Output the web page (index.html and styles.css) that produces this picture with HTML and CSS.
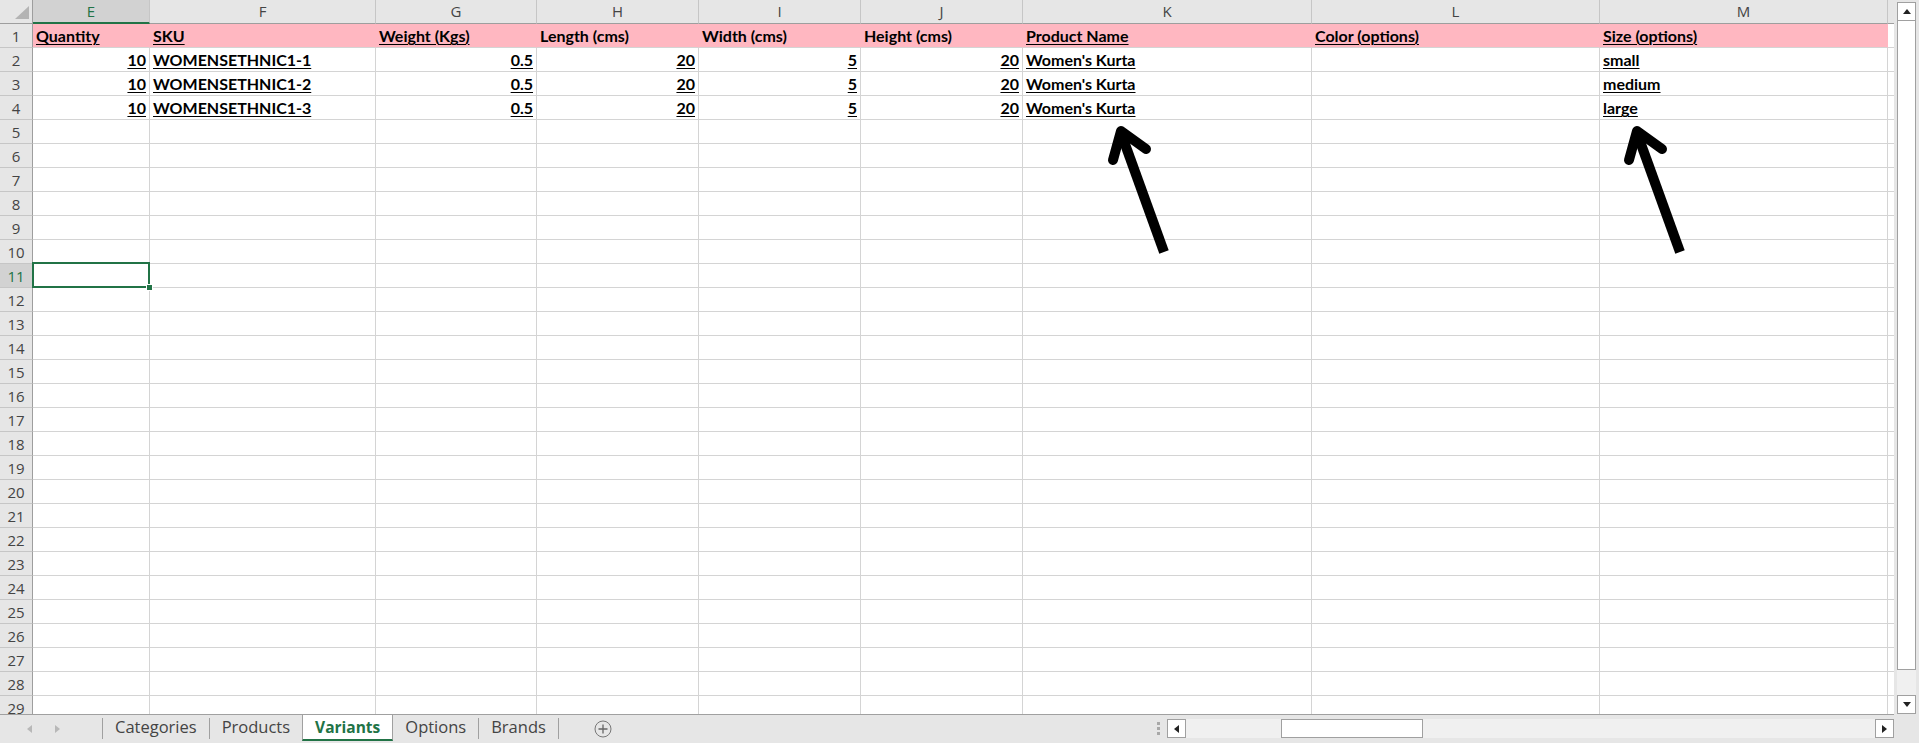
FILE: index.html
```html
<!DOCTYPE html>
<html lang="en">
<head>
  <meta charset="UTF-8" />
  <title>Variants - Book1</title>
  <link rel="stylesheet" href="styles.css">
</head>
<body>
  <div class="app">
    <div class="main">
      <div class="sheet">
        <!-- column headers -->
        <div class="corner"><svg width="32" height="23" viewBox="0 0 32 23"><polygon points="15,19 29,19 29,6" fill="#b4b4b4"/></svg></div>
        <div class="ch on">E</div><div class="ch">F</div><div class="ch">G</div><div class="ch">H</div><div class="ch">I</div><div class="ch">J</div><div class="ch">K</div><div class="ch">L</div><div class="ch">M</div><div class="ch"></div>

        <!-- data rows -->
        <div class="rh">1</div>
        <div class="pk"><u>Quantity</u></div>
        <div class="pk"><u>SKU</u></div>
        <div class="pk"><u>Weight (Kgs)</u></div>
        <div class="pk">Length (cms)</div>
        <div class="pk">Width (cms)</div>
        <div class="pk">Height (cms)</div>
        <div class="pk"><u>Product Name</u></div>
        <div class="pk"><u>Color (options)</u></div>
        <div class="pk"><u>Size (options)</u></div>
        <div></div>

        <div class="rh">2</div>
        <div class="num"><u>10</u></div><div class="txt"><u>WOMENSETHNIC1-1</u></div><div class="num"><u>0.5</u></div><div class="num"><u>20</u></div><div class="num"><u>5</u></div><div class="num"><u>20</u></div><div class="txt"><u>Women's Kurta</u></div><div></div><div class="txt"><u>small</u></div><div></div>
        <div class="rh">3</div>
        <div class="num"><u>10</u></div><div class="txt"><u>WOMENSETHNIC1-2</u></div><div class="num"><u>0.5</u></div><div class="num"><u>20</u></div><div class="num"><u>5</u></div><div class="num"><u>20</u></div><div class="txt"><u>Women's Kurta</u></div><div></div><div class="txt"><u>medium</u></div><div></div>
        <div class="rh">4</div>
        <div class="num"><u>10</u></div><div class="txt"><u>WOMENSETHNIC1-3</u></div><div class="num"><u>0.5</u></div><div class="num"><u>20</u></div><div class="num"><u>5</u></div><div class="num"><u>20</u></div><div class="txt"><u>Women's Kurta</u></div><div></div><div class="txt"><u>large</u></div><div></div>

        <!-- empty rows -->
        <div class="rh">5</div><div></div><div></div><div></div><div></div><div></div><div></div><div></div><div></div><div></div><div></div>
        <div class="rh">6</div><div></div><div></div><div></div><div></div><div></div><div></div><div></div><div></div><div></div><div></div>
        <div class="rh">7</div><div></div><div></div><div></div><div></div><div></div><div></div><div></div><div></div><div></div><div></div>
        <div class="rh">8</div><div></div><div></div><div></div><div></div><div></div><div></div><div></div><div></div><div></div><div></div>
        <div class="rh">9</div><div></div><div></div><div></div><div></div><div></div><div></div><div></div><div></div><div></div><div></div>
        <div class="rh">10</div><div></div><div></div><div></div><div></div><div></div><div></div><div></div><div></div><div></div><div></div>
        <div class="rh on">11</div><div class="sel"></div><div></div><div></div><div></div><div></div><div></div><div></div><div></div><div></div><div></div>
        <div class="rh">12</div><div></div><div></div><div></div><div></div><div></div><div></div><div></div><div></div><div></div><div></div>
        <div class="rh">13</div><div></div><div></div><div></div><div></div><div></div><div></div><div></div><div></div><div></div><div></div>
        <div class="rh">14</div><div></div><div></div><div></div><div></div><div></div><div></div><div></div><div></div><div></div><div></div>
        <div class="rh">15</div><div></div><div></div><div></div><div></div><div></div><div></div><div></div><div></div><div></div><div></div>
        <div class="rh">16</div><div></div><div></div><div></div><div></div><div></div><div></div><div></div><div></div><div></div><div></div>
        <div class="rh">17</div><div></div><div></div><div></div><div></div><div></div><div></div><div></div><div></div><div></div><div></div>
        <div class="rh">18</div><div></div><div></div><div></div><div></div><div></div><div></div><div></div><div></div><div></div><div></div>
        <div class="rh">19</div><div></div><div></div><div></div><div></div><div></div><div></div><div></div><div></div><div></div><div></div>
        <div class="rh">20</div><div></div><div></div><div></div><div></div><div></div><div></div><div></div><div></div><div></div><div></div>
        <div class="rh">21</div><div></div><div></div><div></div><div></div><div></div><div></div><div></div><div></div><div></div><div></div>
        <div class="rh">22</div><div></div><div></div><div></div><div></div><div></div><div></div><div></div><div></div><div></div><div></div>
        <div class="rh">23</div><div></div><div></div><div></div><div></div><div></div><div></div><div></div><div></div><div></div><div></div>
        <div class="rh">24</div><div></div><div></div><div></div><div></div><div></div><div></div><div></div><div></div><div></div><div></div>
        <div class="rh">25</div><div></div><div></div><div></div><div></div><div></div><div></div><div></div><div></div><div></div><div></div>
        <div class="rh">26</div><div></div><div></div><div></div><div></div><div></div><div></div><div></div><div></div><div></div><div></div>
        <div class="rh">27</div><div></div><div></div><div></div><div></div><div></div><div></div><div></div><div></div><div></div><div></div>
        <div class="rh">28</div><div></div><div></div><div></div><div></div><div></div><div></div><div></div><div></div><div></div><div></div>
        <div class="rh">29</div><div></div><div></div><div></div><div></div><div></div><div></div><div></div><div></div><div></div><div></div>

        <!-- hand-drawn arrows on top of the sheet -->
        <svg class="arrows" width="1894" height="714" viewBox="0 0 1894 714">
          <g fill="none" stroke="#000" stroke-width="10">
            <path d="M1164 252 L1121 133"/>
            <path d="M1113 160 L1121 131 L1146 149" stroke-linecap="round" stroke-linejoin="round"/>
            <path d="M1680 252 L1637 133"/>
            <path d="M1629 160 L1637 131 L1662 149" stroke-linecap="round" stroke-linejoin="round"/>
          </g>
        </svg>
      </div>

      <div class="vscroll">
        <div class="sbtn"><span class="tri up"></span></div>
        <div class="vthumb"></div>
        <div class="vtrack"></div>
        <div class="sbtn"><span class="tri down"></span></div>
      </div>
    </div>

    <div class="tabbar">
      <div class="tabbar-in">
        <div class="nav">
          <span class="tri left dim"></span>
          <span class="tri right dim"></span>
        </div>
        <div class="tabs">
          <div class="tab">Categories</div>
          <div class="tab">Products</div>
          <div class="tab active">Variants</div>
          <div class="tab">Options</div>
          <div class="tab">Brands</div>
          <div class="add">
            <svg width="18" height="18" viewBox="0 0 18 18"><circle cx="9" cy="9" r="8" fill="none" stroke="#777" stroke-width="1"/><path d="M9 4.5v9M4.5 9h9" stroke="#666" stroke-width="1.3"/></svg>
          </div>
        </div>
        <div class="grip"><i></i><i></i><i></i></div>
        <div class="hscroll">
          <div class="sbtn"><span class="tri left"></span></div>
          <div class="htrack"><div class="hthumb"></div></div>
          <div class="sbtn"><span class="tri right"></span></div>
        </div>
      </div>
    </div>
  </div>
</body>
</html>
```

FILE: styles.css
```css
body {
  margin: 0;
  background: #e6e6e6;
  font-family: 'Open Sans', sans-serif;
  overflow: hidden;
}

.app {
  width: 1919px;
  height: 743px;
  display: flex;
  flex-direction: column;
}

.main {
  display: flex;
  height: 714px;
}

/* ---- grid ---- */

.sheet {
  position: relative;
  width: 1894px;
  height: 714px;
  overflow: hidden;
  background: #fff;
  display: grid;
  grid-template-columns: 33px 117px 226px 161px 162px 162px 162px 289px 288px 288px 6px;
  grid-auto-rows: 24px;
  align-content: start;
}

.sheet > div {
  box-sizing: border-box;
  border-right: 1px solid #d4d4d4;
  border-bottom: 1px solid #d4d4d4;
  font: bold 16px 'Lato', sans-serif;
  line-height: 23px;
  padding: 0 3px;
  white-space: nowrap;
  overflow: hidden;
}

.sheet u {
  text-decoration-thickness: 1px;
  text-underline-offset: 2px;
}

.sheet > .corner {
  background: #e6e6e6;
  border-right-color: #9e9e9e;
  border-bottom-color: #9e9e9e;
  padding: 0;
}

.corner svg {
  display: block;
}

.sheet > .ch {
  background: #e6e6e6;
  border-right-color: #c6c6c6;
  border-bottom-color: #9e9e9e;
  color: #444;
  font: 15px 'Open Sans', sans-serif;
  line-height: 23px;
  text-align: center;
}

.sheet > .ch.on {
  background: #d2d2d2;
  color: #217346;
  border-bottom: 2px solid #217346;
}

.sheet > .rh {
  background: #e6e6e6;
  border-right-color: #9e9e9e;
  border-bottom-color: #c6c6c6;
  color: #444;
  font: 15px 'Open Sans', sans-serif;
  line-height: 24px;
  text-align: center;
  padding: 0;
}

.sheet > .rh.on {
  background: #d2d2d2;
  color: #217346;
}

.sheet > .pk {
  background: #ffb7c1;
  border-right-color: #ffb7c1;
}

.sheet > .num {
  text-align: right;
}

.sheet > .sel {
  position: relative;
  overflow: visible;
}

.sel::before {
  content: "";
  position: absolute;
  top: -2px;
  left: -1px;
  right: -1px;
  bottom: -1px;
  border: 2px solid #217346;
}

.sel::after {
  content: "";
  position: absolute;
  right: -4px;
  bottom: -4px;
  width: 5px;
  height: 5px;
  background: #217346;
  border: 1px solid #fff;
}

.arrows {
  position: absolute;
  top: 0;
  left: 0;
  pointer-events: none;
}

/* ---- scroll bars ---- */

.vscroll {
  width: 25px;
  box-sizing: border-box;
  padding: 2px 3px 0 3px;
  display: flex;
  flex-direction: column;
}

.sbtn {
  box-sizing: border-box;
  width: 19px;
  height: 19px;
  background: #fff;
  border: 1px solid #a0a0a0;
  display: flex;
  align-items: center;
  justify-content: center;
}

.vthumb {
  height: 649px;
  box-sizing: border-box;
  background: #fff;
  border: 1px solid #a0a0a0;
  border-top: 0;
}

.vtrack {
  flex: 1;
  background: #f0f0f0;
}

.tri {
  width: 0;
  height: 0;
  border: 4px solid transparent;
}

.tri.up { border-bottom: 5px solid #222; border-top: 0; }
.tri.down { border-top: 5px solid #222; border-bottom: 0; }
.tri.left { border-right: 5px solid #222; border-left: 0; }
.tri.right { border-left: 5px solid #222; border-right: 0; }
.tri.dim.left { border-right-color: #b8b8b8; }
.tri.dim.right { border-left-color: #b8b8b8; }

/* ---- sheet tabs ---- */

.tabbar {
  height: 29px;
}

.tabbar-in {
  width: 1894px;
  height: 29px;
  box-sizing: border-box;
  border-top: 1px solid #a0a0a0;
  display: flex;
}

.nav {
  width: 102px;
  display: flex;
  align-items: center;
  gap: 23px;
  padding-left: 27px;
  box-sizing: border-box;
}

.tabs {
  display: flex;
  align-items: flex-start;
  border-left: 1px solid #a0a0a0;
  margin: 3px 0 4px;
  width: 1046px;
}

.tab {
  height: 21px;
  padding: 0 12px;
  font-size: 16.5px;
  line-height: 18px;
  color: #444;
  border-right: 1px solid #a0a0a0;
}

.tab.active {
  margin-top: -3px;
  padding-top: 3px;
  height: 21px;
  background: #fff;
  color: #217346;
  font-size: 15.5px;
  font-weight: bold;
  border-bottom: 2px solid #217346;
  border-left: 1px solid #a0a0a0;
  margin-left: -1px;
}

.add {
  margin-left: 35px;
  padding-top: 2px;
}

.grip {
  width: 18px;
  display: flex;
  flex-direction: column;
  align-items: center;
  gap: 2px;
  padding-top: 7px;
}

.grip i {
  width: 3px;
  height: 3px;
  background: #a8a8a8;
}

.hscroll {
  flex: 1;
  display: flex;
  margin-top: 4px;
  height: 19px;
}

.htrack {
  flex: 1;
  background: #f0f0f0;
  padding-left: 95px;
}

.hthumb {
  width: 142px;
  height: 19px;
  box-sizing: border-box;
  background: #fff;
  border: 1px solid #a0a0a0;
}
```
